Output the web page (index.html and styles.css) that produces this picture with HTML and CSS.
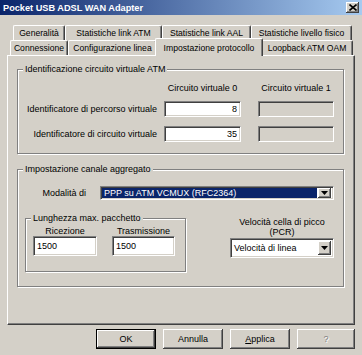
FILE: index.html
```html
<!DOCTYPE html>
<html lang="it">
<head>
    <meta charset="UTF-8">
    <title>Pocket USB ADSL WAN Adapter</title>
    <link rel="stylesheet" href="styles.css">
</head>
<body>
    <div class="window">
        <div class="titlebar">
            <span class="title">Pocket USB ADSL WAN Adapter</span>
            <span class="close">
                <svg width="8" height="7" viewBox="0 0 8 7"><path d="M0.5 0.5 L7.5 6.5 M7.5 0.5 L0.5 6.5" stroke="#000" stroke-width="1.6"/></svg>
            </span>
        </div>

        <div class="tabs">
            <div class="tab-row back">
                <div class="tab t-gen">Generalità</div>
                <div class="tab t-atm">Statistiche link ATM</div>
                <div class="tab t-aal">Statistiche link AAL</div>
                <div class="tab t-fis">Statistiche livello fisico</div>
            </div>
            <div class="tab-row front">
                <div class="tab t-con">Connessione</div>
                <div class="tab t-cfg">Configurazione linea</div>
                <div class="tab t-imp active">Impostazione protocollo</div>
                <div class="tab t-loop">Loopback ATM OAM</div>
            </div>
        </div>

        <div class="panel">
            <fieldset class="group vc-group">
                <legend>Identificazione circuito virtuale ATM</legend>
                <div class="vc-head">
                    <span class="col0">Circuito virtuale 0</span>
                    <span class="col1">Circuito virtuale 1</span>
                </div>
                <div class="vc-row">
                    <label>Identificatore di percorso virtuale</label>
                    <input class="field num w0" type="text" value="8">
                    <input class="field w1" type="text" disabled>
                </div>
                <div class="vc-row second">
                    <label>Identificatore di circuito virtuale</label>
                    <input class="field num w0" type="text" value="35">
                    <input class="field w1" type="text" disabled>
                </div>
            </fieldset>

            <fieldset class="group agg-group">
                <legend>Impostazione canale aggregato</legend>
                <div class="mode-row">
                    <label>Modalità di</label>
                    <div class="combo mode">
                        <span class="combo-text selected">PPP su ATM VCMUX (RFC2364)</span>
                        <span class="combo-btn">
                            <svg width="7" height="4" viewBox="0 0 7 4"><path d="M0 0 H7 L3.5 4 Z" fill="#000"/></svg>
                        </span>
                    </div>
                </div>
                <div class="lower">
                    <fieldset class="group pkt-group">
                        <legend>Lunghezza max. pacchetto</legend>
                        <div class="pkt-cols">
                            <div class="pkt-col rx">
                                <span>Ricezione</span>
                                <input class="field" type="text" value="1500">
                            </div>
                            <div class="pkt-col tx">
                                <span>Trasmissione</span>
                                <input class="field" type="text" value="1500">
                            </div>
                        </div>
                    </fieldset>
                    <div class="pcr">
                        <span class="pcr-label">Velocità cella di picco<br>(PCR)</span>
                        <div class="combo speed">
                            <span class="combo-text">Velocità di linea</span>
                            <span class="combo-btn">
                                <svg width="7" height="4" viewBox="0 0 7 4"><path d="M0 0 H7 L3.5 4 Z" fill="#000"/></svg>
                            </span>
                        </div>
                    </div>
                </div>
            </fieldset>
        </div>

        <div class="buttons">
            <button class="btn default">OK</button>
            <button class="btn">Annulla</button>
            <button class="btn"><u>A</u>pplica</button>
            <button class="btn help" disabled>?</button>
        </div>
    </div>
</body>
</html>
```

FILE: styles.css
```css
body {
    margin: 0;
    background: #d4d0c8;
    font-family: "Liberation Sans", Arial, sans-serif;
    font-size: 9px;
    color: #000;
}

.window {
    width: 362px;
    height: 355px;
    overflow: hidden;
    background: #d4d0c8;
}

/* title bar */
.titlebar {
    height: 15px;
    display: flex;
    align-items: center;
    justify-content: space-between;
    padding: 0 3px 0 3px;
    background: linear-gradient(to right, #0a246a, #a6caf0);
    color: #fff;
    font-weight: bold;
    font-size: 9.2px;
}

.close {
    width: 13px;
    height: 11px;
    box-sizing: border-box;
    background: #d4d0c8;
    box-shadow: inset -1px -1px #404040, inset 1px 1px #fff, inset -2px -2px #808080;
    display: flex;
    align-items: center;
    justify-content: center;
}

/* tabs */
.tabs {
    padding-top: 10px;
}

.tab-row {
    display: flex;
    height: 15px;
}

.tab-row.back {
    padding-left: 13px;
}

.tab-row.front {
    padding-left: 10px;
}

.tab {
    box-sizing: border-box;
    height: 15px;
    border-top: 1px solid #fff;
    border-left: 1px solid #fff;
    border-right: 1px solid #404040;
    box-shadow: inset -1px 0 #808080;
    border-radius: 2px 2px 0 0;
    display: flex;
    align-items: center;
    justify-content: center;
    white-space: nowrap;
    font-size: 8.6px;
    background: #d4d0c8;
}

.t-gen { width: 52px; }
.t-atm { width: 97px; }
.t-aal { width: 89px; }
.t-fis { width: 101px; }
.t-con { width: 58px; }
.t-cfg { width: 89px; }
.t-imp { width: 108px; }
.t-loop { width: 92px; }

.tab.active {
    height: 18px;
    margin: -2px -2px 0 -2px;
    position: relative;
    z-index: 1;
}

/* panel */
.panel {
    margin-left: 7px;
    width: 348px;
    height: 270px;
    box-sizing: border-box;
    border: 1px solid;
    border-color: #fff #404040 #404040 #fff;
    box-shadow: inset -1px -1px #808080;
    padding: 8px 9px 0 9px;
}

.group {
    margin: 0;
    padding: 0;
    min-width: 0;
    box-sizing: border-box;
    border: 1px solid #808080;
    box-shadow: inset 1px 1px #fff, 1px 1px #fff;
}

.group legend {
    padding: 0 2px;
    margin-left: 5px;
    line-height: 11px;
    background: #d4d0c8;
}

.vc-group {
    width: 327px;
    padding-bottom: 11px;
}

.vc-head {
    display: flex;
    padding-top: 8px;
    padding-left: 146px;
    line-height: 11px;
}

.vc-head .col0 {
    width: 77px;
    text-align: center;
}

.vc-head .col1 {
    width: 76px;
    margin-left: 17px;
    text-align: center;
}

.vc-row {
    display: flex;
    align-items: center;
    margin-top: 7px;
}

.vc-row.second {
    margin-top: 9px;
}

.vc-row label {
    width: 139px;
    text-align: right;
}

.field {
    box-sizing: border-box;
    height: 16px;
    margin: 0;
    padding: 0 3px;
    font: inherit;
    color: #000;
    background: #fff;
    border: 1px solid;
    border-color: #808080 #fff #fff #808080;
    box-shadow: inset 1px 1px #404040, inset -1px -1px #d4d0c8;
    outline: none;
}

.field:disabled {
    background: #d4d0c8;
}

.field.num {
    text-align: right;
}

.w0 {
    width: 77px;
    margin-left: 7px;
}

.w1 {
    width: 76px;
    margin-left: 17px;
}

.agg-group {
    width: 327px;
    margin-top: 10px;
    height: 123px;
}

.mode-row {
    display: flex;
    align-items: center;
    margin-top: 11px;
}

.mode-row label {
    width: 68px;
    text-align: right;
}

/* combo boxes */
.combo {
    box-sizing: border-box;
    display: flex;
    align-items: stretch;
    padding: 2px;
    background: #fff;
    border: 1px solid;
    border-color: #808080 #fff #fff #808080;
    box-shadow: inset 1px 1px #404040, inset -1px -1px #d4d0c8;
}

.combo.mode {
    width: 234px;
    height: 14px;
    margin-left: 14px;
    padding: 1px 2px 1px 1px;
}

.combo-text {
    flex: 1;
    display: flex;
    align-items: center;
    padding-left: 2px;
    white-space: nowrap;
    overflow: hidden;
}

.combo-text.selected {
    background: #0a246a;
    color: #fff;
}

.combo-btn {
    width: 13px;
    box-sizing: border-box;
    margin-left: 1px;
    background: #d4d0c8;
    box-shadow: inset -1px -1px #404040, inset 1px 1px #fff, inset -2px -2px #808080;
    display: flex;
    align-items: center;
    justify-content: center;
}

.lower {
    display: flex;
    margin-top: 13px;
}

.pkt-group {
    width: 161px;
    height: 59px;
    margin-left: 7px;
}

.pkt-cols {
    display: flex;
}

.pkt-col {
    display: flex;
    flex-direction: column;
    align-items: center;
    line-height: 10px;
    padding-top: 2px;
}

.pkt-col.rx {
    margin-left: 7px;
    width: 64px;
}

.pkt-col.tx {
    margin-left: 15px;
    width: 63px;
}

.pkt-col .field {
    width: 100%;
    height: 20px;
}

.pcr {
    margin-left: 44px;
    width: 104px;
    padding-top: 4px;
    display: flex;
    flex-direction: column;
}

.pcr-label {
    text-align: center;
    line-height: 10px;
}

.combo.speed {
    height: 20px;
    margin-top: 1px;
    padding: 2px 2px 2px 1px;
}

/* buttons */
.buttons {
    display: flex;
    gap: 7px;
    padding-left: 96px;
    margin-top: 4px;
}

.btn {
    box-sizing: border-box;
    width: 60px;
    height: 20px;
    margin: 0;
    padding: 0;
    font: inherit;
    color: #000;
    background: #d4d0c8;
    border: none;
    box-shadow: inset -1px -1px #404040, inset 1px 1px #fff, inset -2px -2px #808080;
}

.btn.help {
    width: 58px;
}

.btn.default {
    border: 1px solid #000;
}

.btn:disabled {
    color: #808080;
    text-shadow: 1px 1px #fff;
}
```
